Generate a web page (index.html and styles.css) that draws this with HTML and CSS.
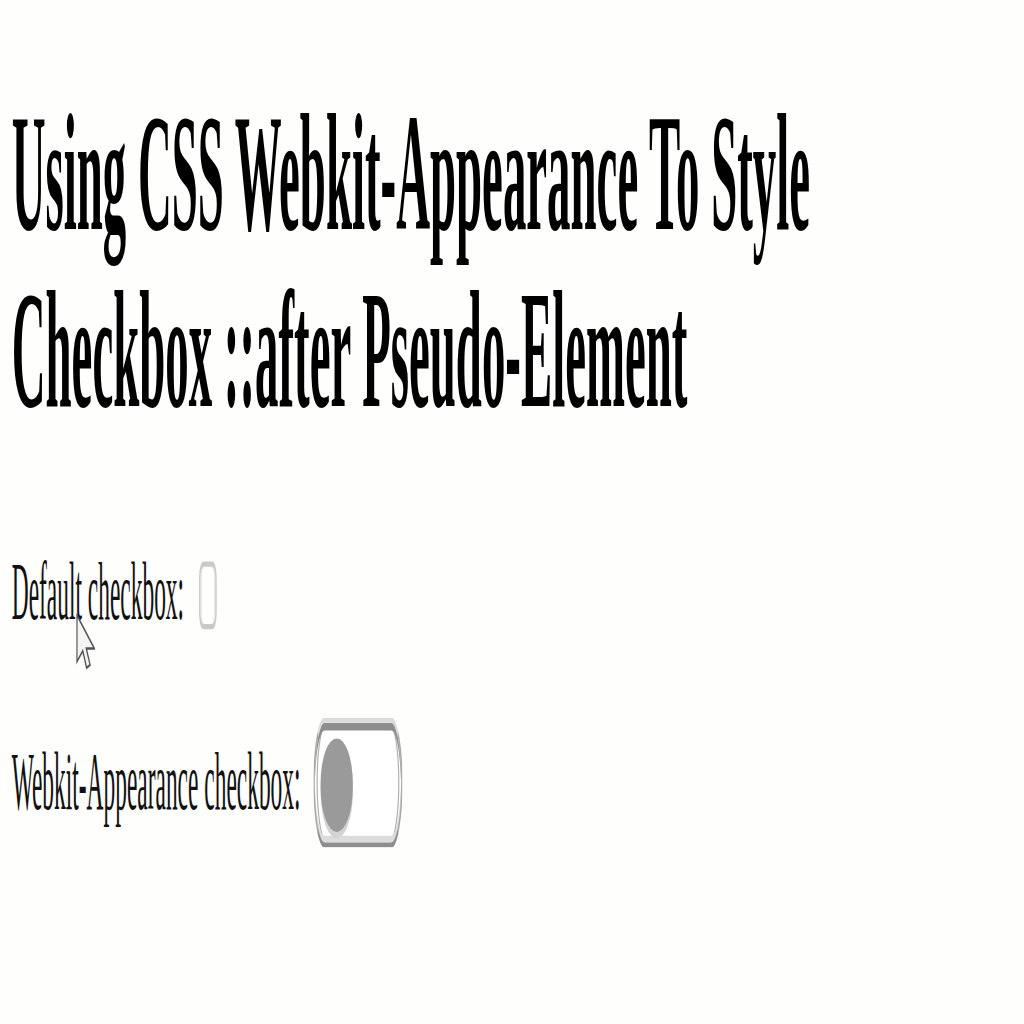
FILE: index.html
```html
<!DOCTYPE html>
<html lang="en">
<head>
<meta charset="utf-8">
<title>Webkit-Appearance Checkbox</title>
<link rel="stylesheet" href="styles.css">
</head>
<body>
<div class="page">
  <h1 class="title">Using CSS Webkit-Appearance To Style Checkbox ::after Pseudo-Element</h1>
  <div class="row row-default">
    <label class="label">Default checkbox:</label><span class="box-default"></span>
    <svg class="cursor" viewBox="0 0 12 19" preserveAspectRatio="none" aria-hidden="true">
      <path d="M0.5 0.5 L0.5 16 L4.2 12.4 L6.6 18 L8.8 17 L6.4 11.6 L11.5 11.6 Z" fill="#f4f4f4" stroke="#555" stroke-width="0.8"/>
    </svg>
  </div>
  <div class="row row-webkit">
    <label class="label">Webkit-Appearance checkbox:</label><span class="toggle"></span>
  </div>
</div>
</body>
</html>
```
FILE: styles.css
```css
html, body {
  margin: 0;
  padding: 0;
  background: #fefefc;
}

html {
  height: 1024px;
}

body {
  height: 1024px;
  overflow: visible;
}

.page {
  box-sizing: border-box;
  width: 699px;
  height: 196px;
  padding: 16.2px 8px 0;
  transform: scale(1.464, 5.2);
  transform-origin: 0 0;
  font-family: "Liberation Serif", "Times New Roman", serif;
  color: #000;
}

.title {
  margin: 0;
  font-size: 32px;
  line-height: 34px;
  font-weight: bold;
}

.row {
  position: relative;
  font-size: 16px;
  line-height: 18.4px;
}

.row-default {
  margin-top: 21px;
}

.row-webkit {
  margin-top: 14.1px;
}

.label {
  color: #111;
}

.box-default {
  display: inline-block;
  box-sizing: border-box;
  width: 12.3px;
  height: 12.5px;
  margin-left: 10px;
  vertical-align: -1.7px;
  border: 1px solid #c9c9c9;
  border-radius: 3px;
  background: #fff;
  box-shadow: inset 1px 0 0 #ececec, inset -1px 0 0 #ececec;
}

.toggle {
  position: relative;
  display: inline-block;
  box-sizing: border-box;
  width: 61px;
  height: 25.4px;
  margin-left: 8.8px;
  vertical-align: -7.9px;
  border: 1.2px solid #a8a8a8;
  border-top-color: #dcdcdc;
  border-bottom-color: #8e8e8e;
  border-radius: 8px / 13px;
  background: #fff;
  box-shadow: inset 0 1.5px 0 #8e8e8e, inset 0 -1.3px 0 #dcdcdc, inset 1.2px 0 0 #fff, inset 2px 0 0 #b0b0b0, inset -1.2px 0 0 #fff, inset -2px 0 0 #b0b0b0;
}

.toggle::after {
  content: "";
  position: absolute;
  left: 3.6px;
  top: 3.4px;
  width: 22.5px;
  height: 17.7px;
  border-radius: 50%;
  background: #9a9a9a;
  box-shadow: 0 1.2px 0 #d4d4d4;
}

.cursor {
  position: absolute;
  left: 44px;
  top: 12.5px;
  width: 13px;
  height: 11px;
}
```
